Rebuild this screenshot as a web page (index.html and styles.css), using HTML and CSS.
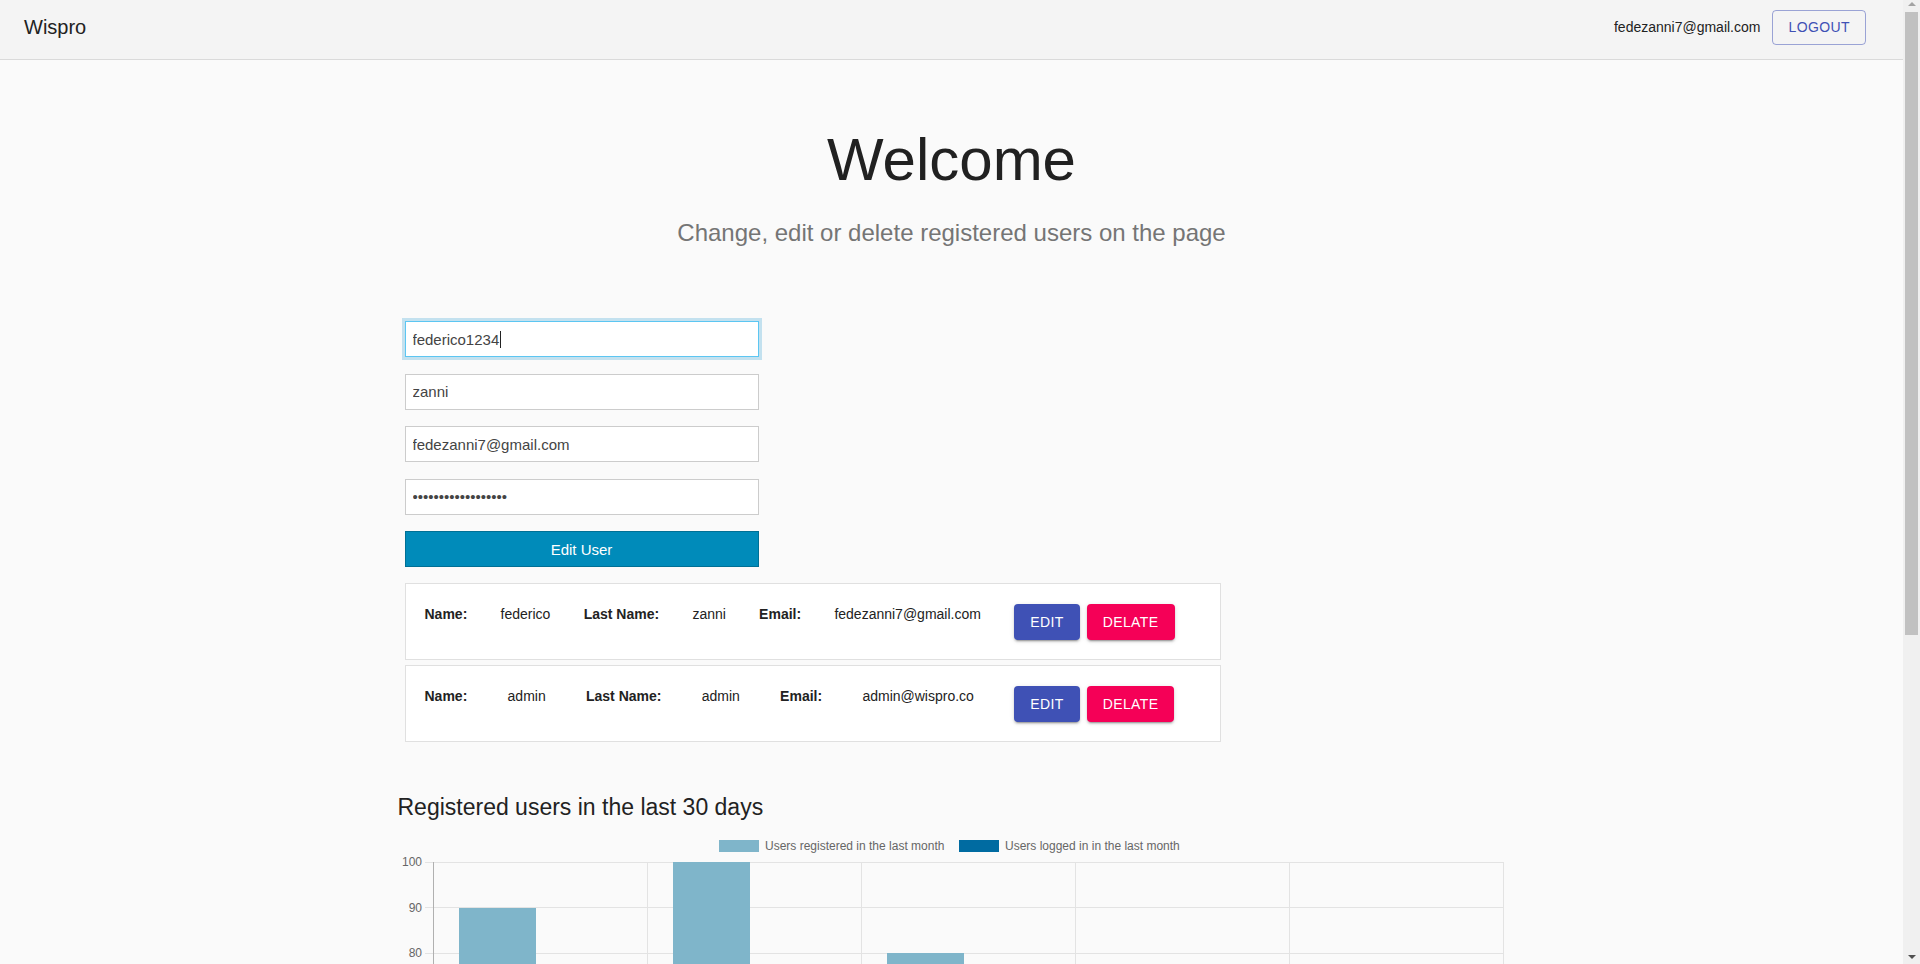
FILE: index.html
```html
<!DOCTYPE html>
<html lang="en">
<head>
<meta charset="utf-8">
<title>Wispro</title>
<link rel="stylesheet" href="styles.css">
</head>
<body>
<header class="topbar">
  <div class="brand">Wispro</div>
  <div class="user">
    <span class="user-email">fedezanni7@gmail.com</span>
    <button type="button" class="btn-outline">Logout</button>
  </div>
</header>
<main class="page">
  <section class="hero">
    <h1 class="hero-title">Welcome</h1>
    <p class="hero-sub">Change, edit or delete registered users on the page</p>
  </section>
  <section class="content">
    <form class="user-form">
      <div class="field field-focused">
        <input class="input" type="text" value="federico1234">
        <span class="caret"></span>
      </div>
      <input class="input" type="text" value="zanni">
      <input class="input" type="email" value="fedezanni7@gmail.com">
      <input class="input" type="password" value="abcdefghijklmnopqr">
      <button type="button" class="btn-submit">Edit User</button>
    </form>

    <div class="user-list">
      <div class="user-card">
        <b class="label">Name:</b><span class="value">federico</span>
        <b class="label">Last Name:</b><span class="value">zanni</span>
        <b class="label">Email:</b><span class="value">fedezanni7@gmail.com</span>
        <div class="actions">
          <button type="button" class="btn btn-edit">Edit</button>
          <button type="button" class="btn btn-delete">Delate</button>
        </div>
      </div>
      <div class="user-card">
        <b class="label">Name:</b><span class="value">admin</span>
        <b class="label">Last Name:</b><span class="value">admin</span>
        <b class="label">Email:</b><span class="value">admin@wispro.co</span>
        <div class="actions">
          <button type="button" class="btn btn-edit">Edit</button>
          <button type="button" class="btn btn-delete">Delate</button>
        </div>
      </div>
    </div>

    <h4 class="chart-title">Registered users in the last 30 days</h4>
    <div class="chart">
      <svg class="chart-svg" width="1110" height="520" viewBox="0 0 1110 520">
        <g class="legend">
          <rect x="322" y="8" width="40" height="12" fill="#7fb5ca"/>
          <text x="368" y="18" class="tick">Users registered in the last month</text>
          <rect x="562" y="8" width="40" height="12" fill="#006ba1"/>
          <text x="608" y="18" class="tick">Users logged in in the last month</text>
        </g>
        <g class="grid" stroke="#e3e3e3" stroke-width="1" shape-rendering="crispEdges">
          <line x1="28" y1="30" x2="1107" y2="30"/>
          <line x1="28" y1="75.5" x2="1107" y2="75.5"/>
          <line x1="28" y1="121" x2="1107" y2="121"/>
          <line x1="28" y1="166.5" x2="1107" y2="166.5"/>
          <line x1="28" y1="212" x2="1107" y2="212"/>
          <line x1="28" y1="257.5" x2="1107" y2="257.5"/>
          <line x1="28" y1="303" x2="1107" y2="303"/>
          <line x1="28" y1="348.5" x2="1107" y2="348.5"/>
          <line x1="28" y1="394" x2="1107" y2="394"/>
          <line x1="28" y1="439.5" x2="1107" y2="439.5"/>
          <line x1="250.5" y1="30" x2="250.5" y2="493"/>
          <line x1="464.5" y1="30" x2="464.5" y2="493"/>
          <line x1="678.5" y1="30" x2="678.5" y2="493"/>
          <line x1="892.5" y1="30" x2="892.5" y2="493"/>
          <line x1="1106.5" y1="30" x2="1106.5" y2="493"/>
        </g>
        <g class="axes" stroke="#b0b0b0" stroke-width="1" shape-rendering="crispEdges">
          <line x1="36.5" y1="30" x2="36.5" y2="493"/>
          <line x1="28" y1="485" x2="1107" y2="485"/>
        </g>
        <g class="ylabels">
          <text x="25" y="34" class="tick" text-anchor="end">100</text>
          <text x="25" y="79.5" class="tick" text-anchor="end">90</text>
          <text x="25" y="125" class="tick" text-anchor="end">80</text>
          <text x="25" y="170.5" class="tick" text-anchor="end">70</text>
          <text x="25" y="216" class="tick" text-anchor="end">60</text>
          <text x="25" y="261.5" class="tick" text-anchor="end">50</text>
          <text x="25" y="307" class="tick" text-anchor="end">40</text>
          <text x="25" y="352.5" class="tick" text-anchor="end">30</text>
          <text x="25" y="398" class="tick" text-anchor="end">20</text>
          <text x="25" y="443.5" class="tick" text-anchor="end">10</text>
          <text x="25" y="489" class="tick" text-anchor="end">0</text>
        </g>
        <g class="bars-registered" fill="#7fb5ca" shape-rendering="crispEdges">
          <rect x="62" y="75.5" width="77" height="409.5"/>
          <rect x="276" y="30" width="77" height="455"/>
          <rect x="490" y="121" width="77" height="364"/>
          <rect x="704" y="257.5" width="77" height="227.5"/>
          <rect x="918" y="303" width="77" height="182"/>
        </g>
        <g class="bars-logged" fill="#006ba1" shape-rendering="crispEdges">
          <rect x="148" y="166.5" width="77" height="318.5"/>
          <rect x="362" y="212" width="77" height="273"/>
          <rect x="576" y="303" width="77" height="182"/>
          <rect x="790" y="348.5" width="77" height="136.5"/>
          <rect x="1004" y="394" width="77" height="91"/>
        </g>
        <g class="xlabels">
          <text x="143.5" y="509" class="tick" text-anchor="middle">Week 1</text>
          <text x="357.5" y="509" class="tick" text-anchor="middle">Week 2</text>
          <text x="571.5" y="509" class="tick" text-anchor="middle">Week 3</text>
          <text x="785.5" y="509" class="tick" text-anchor="middle">Week 4</text>
          <text x="999.5" y="509" class="tick" text-anchor="middle">Week 5</text>
        </g>
      </svg>
    </div>
  </section>
</main>

<div class="scrollbar" aria-hidden="true">
  <span class="sb-arrow sb-up"></span>
  <span class="sb-thumb"></span>
  <span class="sb-fill"></span>
  <span class="sb-arrow sb-down"></span>
</div>
</body>
</html>
```

FILE: styles.css
```css
* {
  box-sizing: border-box;
}

html,
body {
  margin: 0;
  padding: 0;
}

body {
  margin-right: 17px;
  background: #fafafa;
  font-family: "Liberation Sans", Arial, Helvetica, sans-serif;
  color: #222;
}

/* ---------- Top bar ---------- */
.topbar {
  height: 60px;
  display: flex;
  align-items: center;
  justify-content: space-between;
  padding: 0 37px 5px 24px;
  background: #f4f4f4;
  border-bottom: 1px solid #dadada;
}

.brand {
  font-size: 20px;
  line-height: 28px;
  color: #222;
}

.user {
  display: flex;
  align-items: center;
  gap: 12px;
}

.user-email {
  font-size: 14px;
  line-height: 20px;
  color: #222;
}

.btn-outline {
  height: 35px;
  padding: 0 15px;
  font-family: "Liberation Sans", Arial, sans-serif;
  font-size: 14px;
  letter-spacing: 0.4px;
  text-transform: uppercase;
  color: #3f51b5;
  background: transparent;
  border: 1px solid rgba(63, 81, 181, 0.5);
  border-radius: 4px;
}

/* ---------- Hero ---------- */
.hero {
  text-align: center;
}

.hero-title {
  margin: 64px 0 0;
  font-size: 60px;
  font-weight: 400;
  line-height: 72px;
  color: #212121;
}

.hero-sub {
  margin: 21px 0 0;
  font-size: 24px;
  line-height: 32px;
  color: #757575;
}

/* ---------- Content ---------- */
.content {
  width: 1110px;
  margin: 72px auto 0;
  padding-bottom: 88px;
}

.user-form {
  width: 354px;
  margin-left: 8px;
  display: flex;
  flex-direction: column;
  gap: 16.5px;
}

.field {
  position: relative;
}

.input {
  display: block;
  width: 100%;
  height: 36px;
  padding: 0 7px;
  font-family: "Liberation Sans", Arial, sans-serif;
  font-size: 15px;
  color: #444;
  background: #fff;
  border: 1px solid #cccccc;
  border-radius: 0;
  outline: none;
}

.field-focused .input {
  border-color: #5cc6f2;
  box-shadow: 0 0 0 3px #c3e1ef;
}

.caret {
  position: absolute;
  left: 95px;
  top: 10px;
  width: 1px;
  height: 17px;
  background: #222;
}

.btn-submit {
  height: 36px;
  font-family: "Liberation Sans", Arial, sans-serif;
  font-size: 15px;
  color: #fff;
  background: #008bba;
  border: 1px solid #007095;
  border-radius: 0;
}

/* ---------- User list ---------- */
.user-list {
  width: 816px;
  margin: 16px 0 0 8px;
  display: flex;
  flex-direction: column;
  gap: 5px;
}

.user-card {
  display: flex;
  justify-content: space-between;
  align-items: flex-start;
  padding: 20px 45px 19px 19px;
  background: #fff;
  border: 1px solid #e0e0e0;
  font-size: 14px;
  line-height: 20px;
  color: #222;
}

.label {
  font-weight: 700;
}

.actions {
  display: flex;
  gap: 7px;
}

.btn {
  height: 36px;
  min-width: 64px;
  padding: 0 16px;
  font-family: "Liberation Sans", Arial, sans-serif;
  font-size: 14px;
  letter-spacing: 0.4px;
  text-transform: uppercase;
  color: #fff;
  border: 0;
  border-radius: 4px;
  box-shadow: 0 3px 1px -2px rgba(0, 0, 0, 0.2), 0 2px 2px 0 rgba(0, 0, 0, 0.14), 0 1px 5px 0 rgba(0, 0, 0, 0.12);
}

.btn-edit {
  background: #3f51b5;
}

.btn-delete {
  background: #f50057;
}

/* ---------- Chart ---------- */
.chart-title {
  margin: 49px 0 0 1px;
  font-size: 23px;
  font-weight: 400;
  line-height: 32px;
  color: #222;
}

.chart {
  margin-top: 9px;
}

.chart-svg {
  display: block;
}

.tick {
  font-family: "Liberation Sans", Arial, sans-serif;
  font-size: 12px;
  fill: #666;
}

/* ---------- Browser scrollbar (drawn over the page edge) ---------- */
.scrollbar {
  position: fixed;
  top: 0;
  right: 0;
  width: 17px;
  height: 100vh;
  display: flex;
  flex-direction: column;
  align-items: center;
  background: #f0f0f0;
}

.sb-arrow {
  flex: none;
  width: 0;
  height: 0;
  border-left: 4px solid transparent;
  border-right: 4px solid transparent;
}

.sb-up {
  margin: 2px 0 6px;
  border-bottom: 4px solid #a3a3a3;
}

.sb-down {
  margin: 6px 0 5px;
  border-top: 4px solid #505050;
}

.sb-thumb {
  flex: none;
  width: 13px;
  height: 623px;
  background: #c1c1c1;
}

.sb-fill {
  flex: 1;
}
```
